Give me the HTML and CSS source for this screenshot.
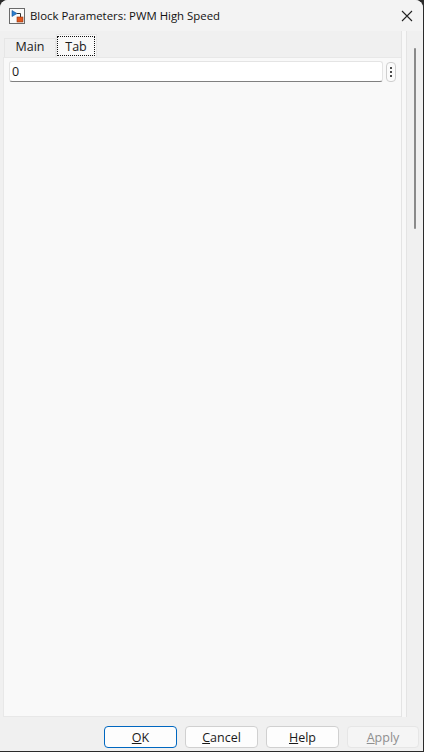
FILE: index.html
```html
<!DOCTYPE html>
<html lang="en">
<head>
<meta charset="utf-8">
<title>Block Parameters: PWM High Speed</title>
<link rel="stylesheet" href="styles.css">
</head>
<body>
<div class="window">
  <header class="titlebar">
    <span class="appicon">
      <svg width="16" height="16" viewBox="0 0 16 16">
        <rect x="0.5" y="0.5" width="15" height="15" fill="#fafafa" stroke="#6a6a6a"/>
        <path d="M3 2.5 L8 5.5 L3 8.5 Z" fill="#2a7fd0" stroke="#1a4f90" stroke-width="0.6"/>
        <path d="M8 5.5 H11.5 V9" fill="none" stroke="#333" stroke-width="1"/>
        <rect x="8" y="9" width="6" height="5" fill="#e2571e" stroke="#8a3210" stroke-width="0.6"/>
      </svg>
    </span>
    <span class="title">Block Parameters: PWM High Speed</span>
    <span class="close">
      <svg width="12" height="12" viewBox="0 0 12 12"><path d="M1 1 L11 11 M11 1 L1 11" stroke="#222" stroke-width="1.1" fill="none"/></svg>
    </span>
  </header>
  <div class="content">
    <div class="main">
      <nav class="tabs">
        <span class="tab">Main</span>
        <span class="tab active"><span class="focus">Tab</span></span>
      </nav>
      <section class="panel">
        <div class="field">
          <div class="input">0</div>
          <span class="more"><i></i><i></i><i></i></span>
        </div>
      </section>
    </div>
    <div class="strip"></div>
    <div class="scrolltrack"><div class="thumb"></div></div>
  </div>
  <footer class="buttons">
    <span class="btn primary"><u>O</u>K</span>
    <span class="btn"><u>C</u>ancel</span>
    <span class="btn"><u>H</u>elp</span>
    <span class="btn disabled"><u>A</u>pply</span>
  </footer>
</div>
</body>
</html>
```
FILE: styles.css
```css
* { box-sizing: border-box; }
html, body { margin: 0; height: 100%; background: #2b2b2b; }
body { width: 424px; height: 752px; overflow: hidden; font-family: "Open Sans", "Liberation Sans", sans-serif; font-size: 12.5px; color: #1a1a1a; }
.window {
  width: 423px; height: 751px; background: #f0f0f0;
  border-radius: 8px 8px 0 0;
  display: flex; flex-direction: column;
  overflow: hidden;
}
.titlebar { height: 31px; flex: none; background: #f3f3f3; display: flex; align-items: center; padding: 0 10px 0 9px; }
.appicon { width: 16px; height: 16px; display: flex; margin-right: 5px; }
.title { flex: 1; font-size: 11.4px; color: #111; }
.close { width: 12px; height: 12px; display: flex; }
.content { flex: 1; display: flex; min-height: 0; }
.main { width: 401px; flex: none; display: flex; flex-direction: column; padding-left: 3px; }
.tabs { height: 26px; flex: none; display: flex; align-items: flex-end; padding-left: 1px; }
.tab { width: 52px; height: 19px; padding-bottom: 3px; display: flex; align-items: center; justify-content: center; background: #f0f0f0; border: 1px solid #e6e6e6; border-bottom: none; }
.tab.active { width: 41px; height: 23px; padding: 1px 1px 1px 0; background: #f9f9f9; }
.focus { width: 100%; height: 100%; border: 1px dotted #111; display: flex; align-items: center; justify-content: center; }
.panel { flex: 1; background: #f9f9f9; border: 1px solid #e8e8e8; border-right: none; padding: 3px 0 0 5px; }
.field { display: flex; align-items: center; gap: 3px; }
.input { width: 374px; height: 21px; background: #fff; border: 1px solid #e4e4e4; border-bottom: 1px solid #808080; border-radius: 3px; padding-left: 2px; line-height: 19px; }
.more { width: 10px; height: 20px; border: 1px solid #cfcfcf; border-radius: 4px; background: #fbfbfb; display: flex; flex-direction: column; align-items: center; justify-content: center; gap: 2px; }
.more i { width: 2px; height: 2px; background: #111; border-radius: 1px; display: block; }
.strip { width: 6px; flex: none; background: #f8f8f8; border-left: 1px solid #e4e4e4; border-right: 1px solid #e4e4e4; }
.scrolltrack { flex: 1; padding: 17px 0 0 7px; }
.thumb { width: 2px; height: 181px; background: #8a8a8a; border-radius: 1px; }
.buttons { height: 34px; flex: none; display: flex; gap: 8px; padding: 9px 0 0 104px; }
.btn { width: 73px; height: 22px; border: 1px solid #d0d0d0; border-radius: 4px; background: #fdfdfd; display: flex; align-items: center; justify-content: center; white-space: pre; }
.btn.primary { border-color: #0067c0; }
.btn.disabled { width: 72px; background: #f5f5f5; border-color: #e6e6e6; color: #8f8f8f; }
```
